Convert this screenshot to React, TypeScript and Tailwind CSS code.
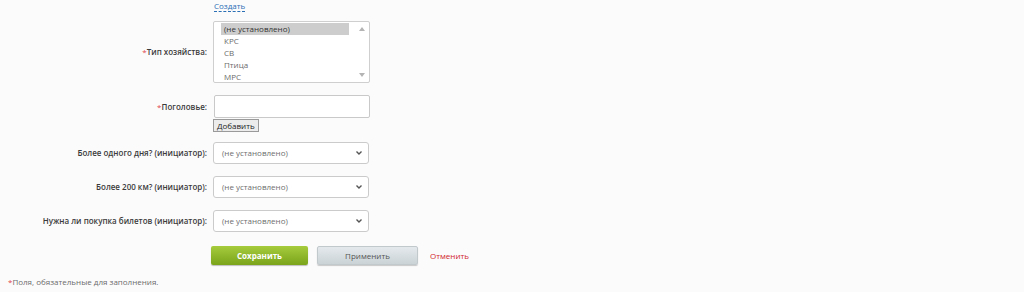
const OPTIONS = ["(не установлено)", "КРС", "СВ", "Птица", "МРС"];

const SELECTS = [
  "Более одного дня? (инициатор):",
  "Более 200 км? (инициатор):",
  "Нужна ли покупка билетов (инициатор):",
];

function Label({ text, required }: { text: string; required?: boolean }) {
  return (
    <div className="pr-[6px] text-right text-[8px] leading-[12px] font-semibold text-[#3b3b3b]">
      {required && <span className="text-[#e0454a] font-normal">*</span>}
      {text}
    </div>
  );
}

function Chevron() {
  return (
    <svg width="8" height="6" viewBox="0 0 8 6" className="text-[#555]">
      <path d="M1.5 1.5 L4 4 L6.5 1.5" fill="none" stroke="currentColor" strokeWidth="1.4" />
    </svg>
  );
}

export default function App() {
  return (
    <div
      className="w-full h-[292px] bg-[#fcfbfc] overflow-hidden text-[8px] leading-[12px]"
      style={{ fontFamily: '"Open Sans", "Noto Sans", sans-serif' }}
    >
      <div className="grid grid-cols-[213px_157px] items-center">
        <div />
        <div className="h-[21px] pl-[1px] flex items-start">
          <span className="text-[#2b6fb5] border-b border-dashed border-[#2b6fb5] leading-[10px] pt-[1px]">
            Создать
          </span>
        </div>

        <Label text="Тип хозяйства:" required />
        <div className="h-[62px] bg-white border border-[#cfcfcf] rounded-[2px] flex">
          <div className="flex-1 pl-[7px] pr-[6px] pt-[1px] overflow-hidden">
            {OPTIONS.map((o, i) => (
              <div
                key={o}
                className={`h-[12px] leading-[12px] pl-[3px] ${
                  i === 0 ? "bg-[#cdcdcd] text-[#333]" : "text-[#6b6b6b]"
                }`}
              >
                {o}
              </div>
            ))}
          </div>
          <div className="w-[14px] flex flex-col justify-between items-center py-[5px]">
            <svg width="6" height="4" viewBox="0 0 6 4">
              <path d="M0 4 L3 0 L6 4 Z" fill="#b4b4b4" />
            </svg>
            <svg width="6" height="4" viewBox="0 0 6 4">
              <path d="M0 0 L3 4 L6 0 Z" fill="#b4b4b4" />
            </svg>
          </div>
        </div>

        <div className="h-[12px] col-span-2" />

        <Label text="Поголовье:" required />
        <div className="h-[23px] bg-white border border-[#c9c9c9] rounded-[2px] ml-[1px] w-[156px]" />
        <div />
        <div className="pt-[1px] flex">
          <div className="h-[13px] px-[3px] bg-[#ececec] border border-[#9a9a9a] leading-[11px] text-[#222]">
            Добавить
          </div>
        </div>

        {SELECTS.map((s, i) => (
          <div key={s} className="contents">
            <div className={i === 0 ? "h-[10px] col-span-2" : "h-[12px] col-span-2"} />
            <Label text={s} />
            <div className="h-[22px] w-[156px] bg-white border border-[#cbcbcb] rounded-[3px] flex items-center justify-between pl-[8px] pr-[5px]">
              <span className="text-[#6e6e6e]">(не установлено)</span>
              <Chevron />
            </div>
          </div>
        ))}
      </div>

      <div className="flex items-center mt-[14px] pl-[211px]">
        <div className="w-[97px] h-[19px] rounded-[2px] bg-gradient-to-b from-[#a6cc3c] to-[#7ba41a] shadow-[0_1px_1px_rgba(0,0,0,0.25)] flex items-center justify-center text-white font-bold">
          Сохранить
        </div>
        <div className="ml-[9px] w-[101px] h-[19px] rounded-[2px] bg-gradient-to-b from-[#e4e9ec] to-[#cbd3d7] border border-[#c2c9cd] shadow-[0_1px_1px_rgba(0,0,0,0.2)] flex items-center justify-center text-[#555]">
          Применить
        </div>
        <span className="ml-[12px] text-[#d0262b]">Отменить</span>
      </div>

      <div className="mt-[11px] pl-[8px] text-[#6b6b6b]">
        <span className="text-[#e0454a]">*</span>Поля, обязательные для заполнения.
      </div>
    </div>
  );
}
